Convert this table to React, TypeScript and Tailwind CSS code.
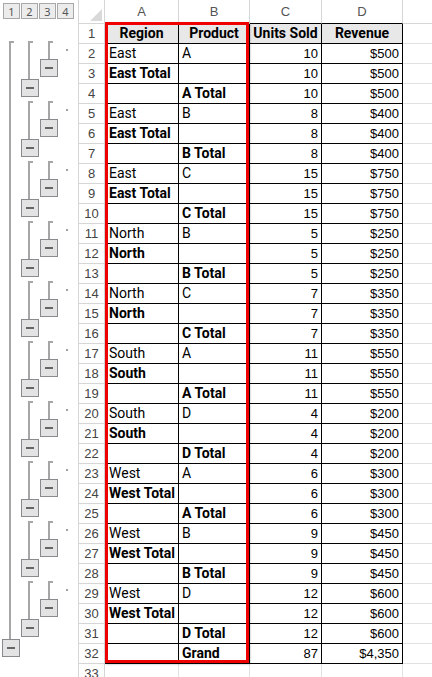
import React from "react";

type Kind = "start" | "mid" | "btn" | "dot" | "none";

type Row = {
  a: string;
  aBold?: boolean;
  b: string;
  bBold?: boolean;
  c: string;
  d: string;
};

const groups: [string, string, number, string, string, string][] = [
  ["East", "A", 10, "$500", "East Total", "A Total"],
  ["East", "B", 8, "$400", "East Total", "B Total"],
  ["East", "C", 15, "$750", "East Total", "C Total"],
  ["North", "B", 5, "$250", "North", "B Total"],
  ["North", "C", 7, "$350", "North", "C Total"],
  ["South", "A", 11, "$550", "South", "A Total"],
  ["South", "D", 4, "$200", "South", "D Total"],
  ["West", "A", 6, "$300", "West Total", "A Total"],
  ["West", "B", 9, "$450", "West Total", "B Total"],
  ["West", "D", 12, "$600", "West Total", "D Total"],
];

const rows: Row[] = [];
groups.forEach(([region, product, units, rev, regionTotal, productTotal]) => {
  rows.push({ a: region, b: product, c: String(units), d: rev });
  rows.push({ a: regionTotal, aBold: true, b: "", c: String(units), d: rev });
  rows.push({ a: "", b: productTotal, bBold: true, c: String(units), d: rev });
});
rows.push({ a: "", b: "Grand", bBold: true, c: "87", d: "$4,350" });

const lineLeft = ["left-[9px]", "left-[9px]", "left-[10px]", "left-[9px]"];

function outlineFor(r: number): Kind[] {
  // r is the sheet row number
  if (r < 2 || r > 32) return ["none", "none", "none", "none"];
  if (r === 32) return ["btn", "none", "none", "none"];
  const i = (r - 2) % 3;
  const l1: Kind = r === 2 ? "start" : "mid";
  if (i === 0) return [l1, "start", "start", "dot"];
  if (i === 1) return [l1, "mid", "btn", "none"];
  return [l1, "btn", "none", "none"];
}

function OutlineCell({ kind, level }: { kind: Kind; level: number }) {
  return (
    <div className="relative h-5 w-[19px]">
      {kind === "start" && (
        <>
          <div className={`absolute ${lineLeft[level]} top-[2px] bottom-0 w-[2px] bg-[#a6a6a6]`} />
          <div className={`absolute ${lineLeft[level]} top-[2px] h-[2px] w-[5px] bg-[#a6a6a6]`} />
        </>
      )}
      {kind === "mid" && (
        <div className={`absolute ${lineLeft[level]} top-0 bottom-0 w-[2px] bg-[#a6a6a6]`} />
      )}
      {kind === "btn" && (
        <div className="absolute left-[2px] top-0 flex h-[18px] w-[18px] items-center justify-center border border-[#8a8a8e] bg-[#e3e3e3]">
          <div className="h-[2px] w-[8px] bg-[#666]" />
        </div>
      )}
      {kind === "dot" && (
        <div className={`absolute ${lineLeft[level]} top-[10px] h-[2px] w-[2px] bg-[#a0a0a0]`} />
      )}
    </div>
  );
}

function Gutter() {
  const sheetRows = Array.from({ length: 33 }, (_, i) => i + 1);
  return (
    <div className="flex w-[78px] shrink-0 flex-col">
      <div className="flex h-6 items-start gap-px pl-[3px] pt-[3px]">
        {["1", "2", "3", "4"].map((n) => (
          <div
            key={n}
            className="flex h-[16px] w-[17px] items-center justify-center border border-[#a8a8a8] bg-[#ececec] text-[11px] leading-none text-[#555]"
          >
            {n}
          </div>
        ))}
      </div>
      {sheetRows.map((r) => (
        <div key={r} className="flex h-5">
          {outlineFor(r).map((k, lvl) => (
            <OutlineCell key={lvl} kind={k} level={lvl} />
          ))}
        </div>
      ))}
    </div>
  );
}

const label = "font-['Roboto',sans-serif] text-[14px] text-black";
const num = "font-['Liberation_Sans',Arial,sans-serif] text-[13px] text-black";

export default function App() {
  return (
    <div className="flex h-[677px] w-[432px] overflow-hidden bg-white">
      <Gutter />
      <div className="relative flex-1">
        <div className="grid grid-cols-[27px_74px_71px_72px_81px_1fr] font-['Liberation_Sans',Arial,sans-serif]">
          {/* column headers */}
          <div className="relative h-6 border-b border-r border-l border-[#d6d6d6]">
            <div className="absolute bottom-[2px] right-[2px] h-0 w-0 border-b-[12px] border-l-[12px] border-b-[#d9d9d9] border-l-transparent" />
          </div>
          {["A", "B", "C", "D"].map((c) => (
            <div
              key={c}
              className={`flex h-6 items-center justify-center border-r border-[#d6d6d6] border-b text-[13px] text-[#555] ${
                c === "C" || c === "D" ? "border-b-black" : ""
              }`}
            >
              {c}
            </div>
          ))}
          <div className="h-6 border-b border-[#d6d6d6]" />

          {/* row 1 */}
          <div className="flex h-5 items-center justify-center border-b border-r border-l border-[#d6d6d6] text-[13px] text-[#444]">
            1
          </div>
          {["Region", "Product", "Units Sold", "Revenue"].map((h) => (
            <div
              key={h}
              className={`flex h-5 items-center justify-center border-b border-r border-black bg-[#e8e8e8] font-bold ${label}`}
            >
              {h}
            </div>
          ))}
          <div className="h-5 border-b border-[#e1e1e1]" />

          {rows.map((row, i) => (
            <React.Fragment key={i}>
              <div className="flex h-5 items-center justify-center border-b border-r border-l border-[#d6d6d6] text-[13px] text-[#444]">
                {i + 2}
              </div>
              <div className={`flex h-5 items-center overflow-hidden whitespace-nowrap border-b border-r border-black pl-[4px] ${label} ${row.aBold ? "font-bold" : ""}`}>
                {row.a}
              </div>
              <div className={`flex h-5 items-center overflow-hidden whitespace-nowrap border-b border-r border-black pl-[3px] ${label} ${row.bBold ? "font-bold" : ""}`}>
                {row.b}
              </div>
              <div className={`flex h-5 items-center justify-end border-b border-r border-black pr-[3px] ${num}`}>
                {row.c}
              </div>
              <div className={`flex h-5 items-center justify-end border-b border-r border-black pr-[3px] ${num}`}>
                {row.d}
              </div>
              <div className="h-5 border-b border-[#e1e1e1]" />
            </React.Fragment>
          ))}

          {/* row 33 */}
          <div className="flex h-5 items-center justify-center border-b border-r border-l border-[#d6d6d6] text-[13px] text-[#444]">
            33
          </div>
          <div className="h-5 border-b border-r border-[#e1e1e1]" />
          <div className="h-5 border-b border-r border-[#e1e1e1]" />
          <div className="h-5 border-b border-r border-[#e1e1e1]" />
          <div className="h-5 border-b border-r border-[#e1e1e1]" />
          <div className="h-5 border-b border-[#e1e1e1]" />
        </div>

        {/* selection outline drawn over A1:B32 */}
        <div className="pointer-events-none absolute left-[27px] top-[22px] h-[641px] w-[144px] border-[3px] border-[#ee0000] shadow-[1px_1px_2px_rgba(0,0,0,0.35)]" />
      </div>
    </div>
  );
}
